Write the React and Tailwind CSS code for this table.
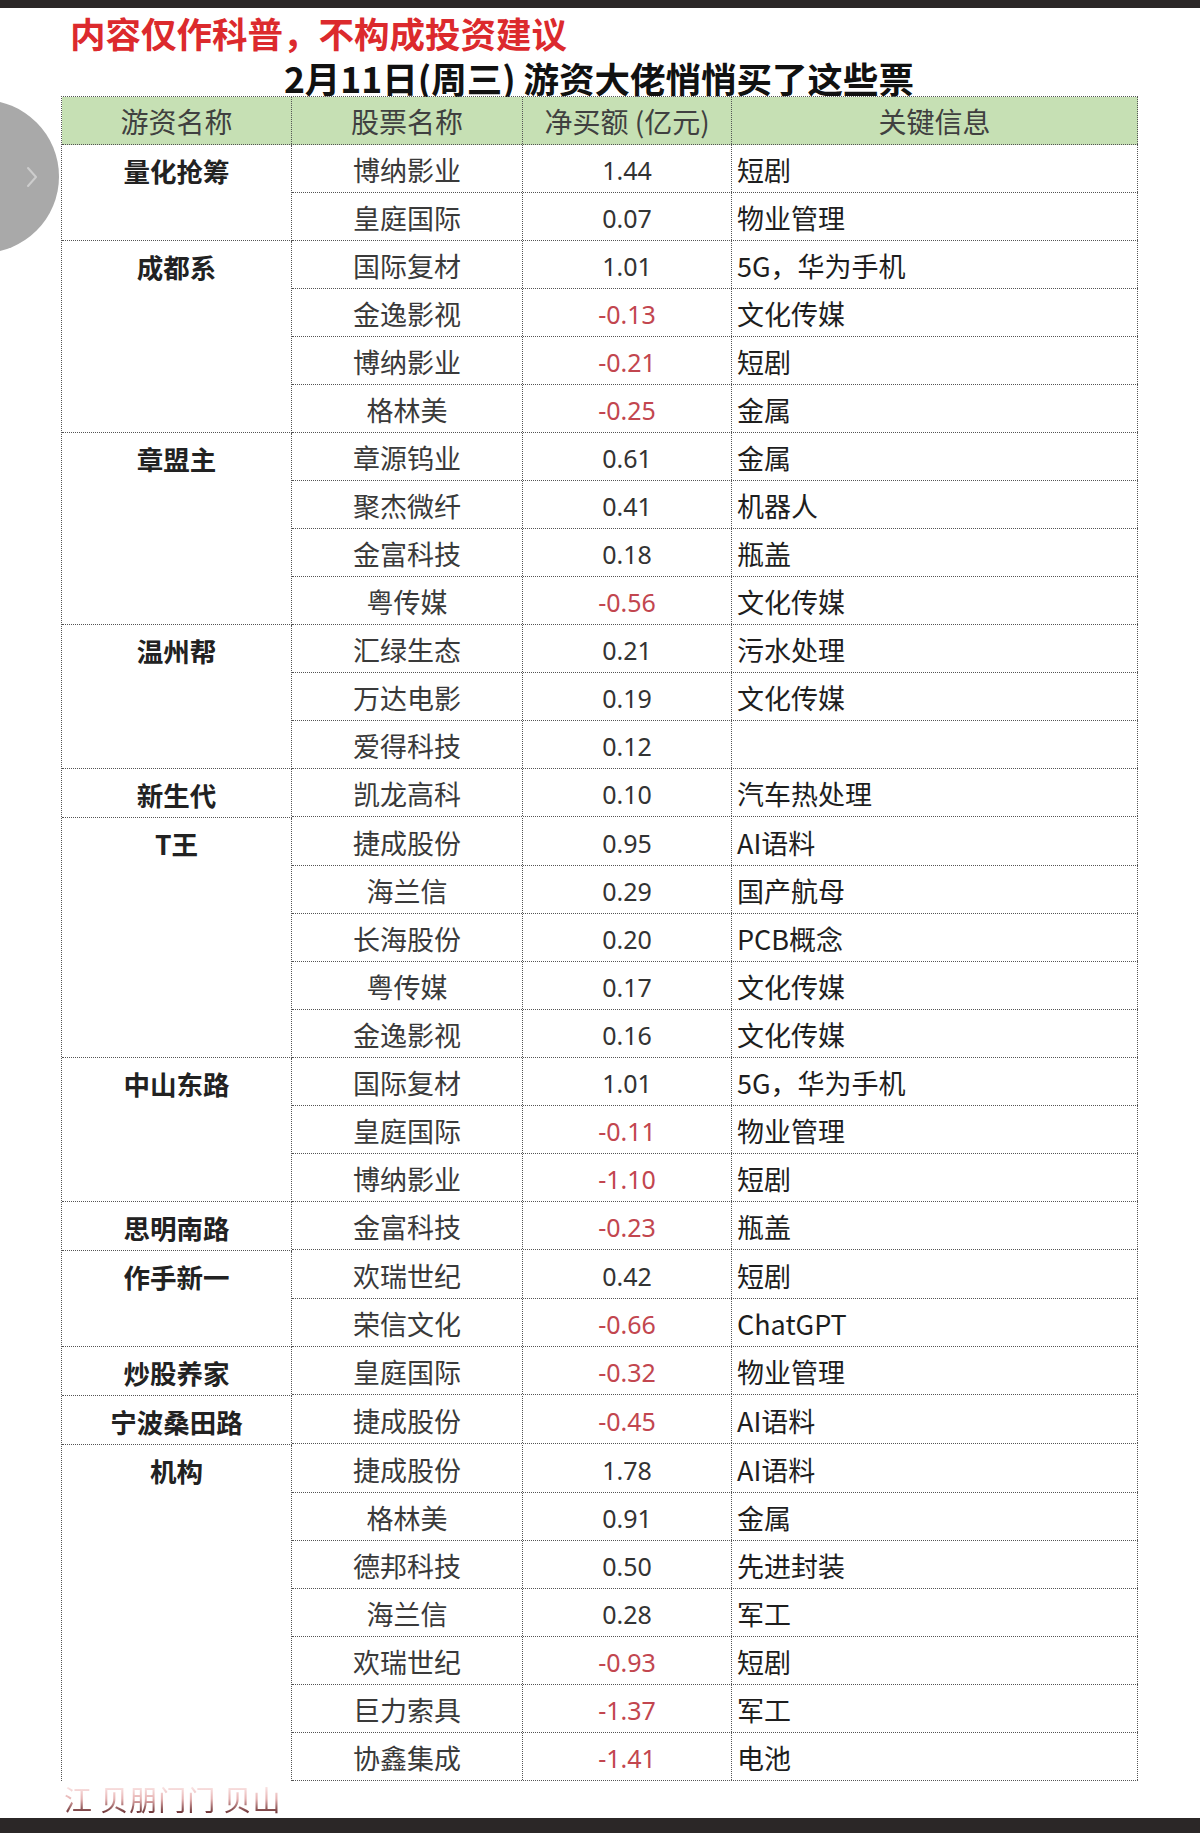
import React from "react";

const groups = [
  {
    name: "量化抢筹",
    rows: [
      ["博纳影业", "1.44", "短剧"],
      ["皇庭国际", "0.07", "物业管理"],
    ],
  },
  {
    name: "成都系",
    rows: [
      ["国际复材", "1.01", "5G，华为手机"],
      ["金逸影视", "-0.13", "文化传媒"],
      ["博纳影业", "-0.21", "短剧"],
      ["格林美", "-0.25", "金属"],
    ],
  },
  {
    name: "章盟主",
    rows: [
      ["章源钨业", "0.61", "金属"],
      ["聚杰微纤", "0.41", "机器人"],
      ["金富科技", "0.18", "瓶盖"],
      ["粤传媒", "-0.56", "文化传媒"],
    ],
  },
  {
    name: "温州帮",
    rows: [
      ["汇绿生态", "0.21", "污水处理"],
      ["万达电影", "0.19", "文化传媒"],
      ["爱得科技", "0.12", ""],
    ],
  },
  { name: "新生代", rows: [["凯龙高科", "0.10", "汽车热处理"]] },
  {
    name: "T王",
    rows: [
      ["捷成股份", "0.95", "AI语料"],
      ["海兰信", "0.29", "国产航母"],
      ["长海股份", "0.20", "PCB概念"],
      ["粤传媒", "0.17", "文化传媒"],
      ["金逸影视", "0.16", "文化传媒"],
    ],
  },
  {
    name: "中山东路",
    rows: [
      ["国际复材", "1.01", "5G，华为手机"],
      ["皇庭国际", "-0.11", "物业管理"],
      ["博纳影业", "-1.10", "短剧"],
    ],
  },
  { name: "思明南路", rows: [["金富科技", "-0.23", "瓶盖"]] },
  {
    name: "作手新一",
    rows: [
      ["欢瑞世纪", "0.42", "短剧"],
      ["荣信文化", "-0.66", "ChatGPT"],
    ],
  },
  { name: "炒股养家", rows: [["皇庭国际", "-0.32", "物业管理"]] },
  { name: "宁波桑田路", rows: [["捷成股份", "-0.45", "AI语料"]] },
  {
    name: "机构",
    rows: [
      ["捷成股份", "1.78", "AI语料"],
      ["格林美", "0.91", "金属"],
      ["德邦科技", "0.50", "先进封装"],
      ["海兰信", "0.28", "军工"],
      ["欢瑞世纪", "-0.93", "短剧"],
      ["巨力索具", "-1.37", "军工"],
      ["协鑫集成", "-1.41", "电池"],
    ],
  },
];

const cjk = { fontFamily: '"Noto Sans CJK SC", "Noto Sans", sans-serif' };
const num = { fontFamily: '"Noto Sans", "Noto Sans CJK SC", sans-serif' };

const Row = ({ stock, amount, info }) => {
  const neg = amount.startsWith("-");
  return (
    <div className="flex h-[48px] border-b border-dotted border-[#555]">
      <div className="w-[231px] flex items-center justify-center border-r border-dotted border-[#555] text-[27px] text-[#3a3a3a] pt-[4px]">
        {stock}
      </div>
      <div
        style={num}
        className={`w-[209px] flex items-center justify-center border-r border-dotted border-[#555] text-[25px] pt-[5px] ${
          neg ? "text-[#c2464f]" : "text-[#333]"
        }`}
      >
        {amount}
      </div>
      <div className="w-[406px] flex items-center pl-[5px] border-r border-dotted border-[#555] text-[27px] text-[#1e1e1e] pt-[4px]">
        {info}
      </div>
    </div>
  );
};

const Group = ({ name, rows, last }) => (
  <div className="flex">
    <div
      className={`w-[230px] border-r border-dotted border-[#555] ${
        last ? "" : "border-b"
      }`}
    >
      <div className="h-[48px] flex items-center justify-center font-bold text-[26.5px] text-[#222] pt-[3px]">
        {name}
      </div>
    </div>
    <div className="flex flex-col">
      {rows.map(([s, a, i], k) => (
        <Row key={k} stock={s} amount={a} info={i} />
      ))}
    </div>
  </div>
);

export default function App() {
  return (
    <div
      style={cjk}
      className="relative w-[1200px] h-[1833px] bg-white overflow-hidden flex flex-col"
    >
      <div className="h-[8px] bg-[#2b2727] shrink-0" />

      <div className="mt-[2px] h-[45px] pl-[70px] text-[35.5px] leading-[45px] font-bold text-[#dc2a2d]">
        内容仅作科普，不构成投资建议
      </div>

      <div className="mt-[5px] h-[36px] w-[1076px] ml-[61px] text-center text-[35.5px] leading-[36px] font-bold text-[#111]">
        2月11日(周三) 游资大佬悄悄买了这些票
      </div>

      <div className="ml-[61px] w-[1077px] border-l border-t border-dotted border-[#555]">
        <div className="flex h-[48px] bg-[#c6e0b4] border-b border-dotted border-[#555] text-[28px] text-[#404040]">
          <div className="w-[230px] flex items-center justify-center border-r border-dotted border-[#555]">
            游资名称
          </div>
          <div className="w-[231px] flex items-center justify-center border-r border-dotted border-[#555]">
            股票名称
          </div>
          <div className="w-[209px] flex items-center justify-center border-r border-dotted border-[#555]">
            净买额 (亿元)
          </div>
          <div className="w-[406px] flex items-center justify-center border-r border-dotted border-[#555]">
            关键信息
          </div>
        </div>
        {groups.map((g, i) => (
          <Group key={i} name={g.name} rows={g.rows} last={i === groups.length - 1} />
        ))}
      </div>

      {/* smeared caption fragment under the table */}
      <div className="ml-[64px] w-[224px] h-[34px] flex items-end">
        <span className="text-[28px] leading-[32px] tracking-[1px] whitespace-nowrap bg-gradient-to-b from-[#fff4f4] via-[#e6b3b3] to-[#5a2226] bg-clip-text text-transparent">
          江 贝朋门门 贝山
        </span>
      </div>

      <div className="mt-auto h-[15px] bg-[#2b2727] shrink-0" />

      {/* side pager button */}
      <div className="absolute left-[-94px] top-[100px] w-[153px] h-[153px] rounded-full bg-[#a9a9a9] flex items-center justify-end pr-[20px]">
        <svg width="14" height="22" viewBox="0 0 14 22" fill="none">
          <path d="M3 2l8 9-8 9" stroke="#cdcdcd" strokeWidth="2" strokeLinecap="round" strokeLinejoin="round" />
        </svg>
      </div>
    </div>
  );
}
